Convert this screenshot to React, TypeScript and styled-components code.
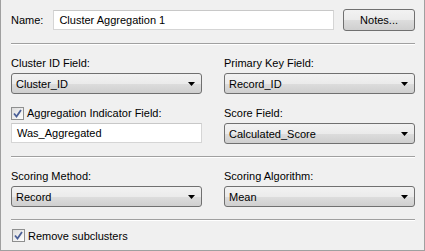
import React from "react";
import styled, { createGlobalStyle } from "styled-components";

const GlobalStyle = createGlobalStyle`
  body {
    margin: 0;
    background: #ffffff;
    font-family: "Liberation Sans", Arial, sans-serif;
    font-size: 11px;
    color: #000;
  }
`;

const Panel = styled.div`
  box-sizing: border-box;
  width: 425px;
  height: 251px;
  background: #f0f0f0;
  border: 1px solid #a0a0a0;
  border-top: none;
  padding: 9px 9px 0 10px;
  display: flex;
  flex-direction: column;
`;

const NameRow = styled.div`
  display: flex;
  align-items: center;
  height: 22px;
`;

const Label = styled.span`
  white-space: nowrap;
`;

const TextBox = styled.div<{ $width: number }>`
  box-sizing: border-box;
  width: ${(p) => p.$width}px;
  height: 20px;
  background: #fff;
  border: 1px solid #d5d5d5;
  border-top-color: #c8c8c8;
  padding: 0 5px;
  display: flex;
  align-items: center;
`;

const NameBox = styled(TextBox)`
  margin-left: 10px;
`;

const Button = styled.button`
  box-sizing: border-box;
  margin-left: 9px;
  width: 73px;
  height: 22px;
  border: 1px solid #707070;
  border-radius: 3px;
  background: linear-gradient(#f2f2f2 0%, #ebebeb 50%, #dddddd 51%, #cfcfcf 100%);
  font: inherit;
  color: #000;
  padding: 0;
`;

const Separator = styled.div<{ $top: number }>`
  margin-top: ${(p) => p.$top}px;
  border-top: 1px solid #a0a0a0;
  border-bottom: 1px solid #ffffff;
  width: 404px;
`;

const Grid = styled.div<{ $top: number }>`
  display: grid;
  grid-template-columns: 191px 191px;
  column-gap: 22px;
  margin-top: ${(p) => p.$top}px;
`;

const Field = styled.div`
  display: flex;
  flex-direction: column;
`;

const FieldLabel = styled.div`
  height: 13px;
  line-height: 13px;
  margin-bottom: 3px;
  display: flex;
  align-items: center;
  gap: 3px;
`;

const Combo = styled.div`
  box-sizing: border-box;
  height: 21px;
  border: 1px solid #707070;
  border-radius: 3px;
  background: linear-gradient(#f2f2f2 0%, #ebebeb 50%, #dddddd 51%, #cfcfcf 100%);
  display: flex;
  align-items: center;
  justify-content: space-between;
  padding: 0 6px 0 4px;
`;

const Check = styled.span`
  box-sizing: border-box;
  width: 13px;
  height: 13px;
  border: 1px solid #8e8f8f;
  background: linear-gradient(135deg, #dcdcdc, #ffffff);
  display: inline-flex;
  align-items: center;
  justify-content: center;
  flex: none;
`;

const CheckRow = styled.div`
  display: flex;
  align-items: center;
  gap: 3px;
  margin-top: 8px;
  margin-left: 1px;
`;

const Arrow = () => (
  <svg width="7" height="4" viewBox="0 0 7 4">
    <path d="M0 0H7L3.5 4Z" fill="#000" />
  </svg>
);

const Tick = () => (
  <svg width="9" height="9" viewBox="0 0 9 9">
    <path d="M1 4.5L3.5 7.5L8 1" stroke="#4a5f97" strokeWidth="1.8" fill="none" />
  </svg>
);

const Select = ({ value }: { value: string }) => (
  <Combo>
    <span>{value}</span>
    <Arrow />
  </Combo>
);

export default function App() {
  return (
    <>
      <GlobalStyle />
      <Panel>
        <NameRow>
          <Label>Name:</Label>
          <NameBox $width={285}>Cluster Aggregation 1</NameBox>
          <Button>Notes...</Button>
        </NameRow>
        <Separator $top={12} />
        <Grid $top={12}>
          <Field>
            <FieldLabel>Cluster ID Field:</FieldLabel>
            <Select value="Cluster_ID" />
          </Field>
          <Field>
            <FieldLabel>Primary Key Field:</FieldLabel>
            <Select value="Record_ID" />
          </Field>
        </Grid>
        <Grid $top={13}>
          <Field>
            <FieldLabel>
              <Check>
                <Tick />
              </Check>
              Aggregation Indicator Field:
            </FieldLabel>
            <TextBox $width={191}>Was_Aggregated</TextBox>
          </Field>
          <Field>
            <FieldLabel>Score Field:</FieldLabel>
            <Select value="Calculated_Score" />
          </Field>
        </Grid>
        <Separator $top={12} />
        <Grid $top={12}>
          <Field>
            <FieldLabel>Scoring Method:</FieldLabel>
            <Select value="Record" />
          </Field>
          <Field>
            <FieldLabel>Scoring Algorithm:</FieldLabel>
            <Select value="Mean" />
          </Field>
        </Grid>
        <Separator $top={12} />
        <CheckRow>
          <Check>
            <Tick />
          </Check>
          Remove subclusters
        </CheckRow>
      </Panel>
    </>
  );
}
